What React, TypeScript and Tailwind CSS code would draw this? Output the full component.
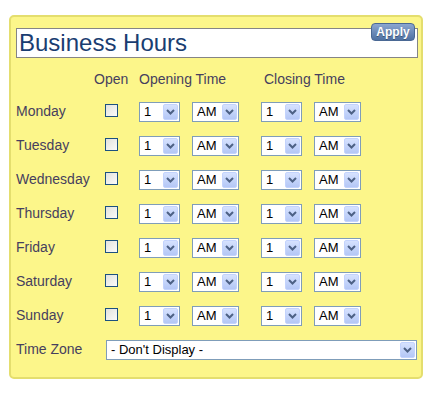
import React from "react";

const days = ["Monday", "Tuesday", "Wednesday", "Thursday", "Friday", "Saturday", "Sunday"];

const Chevron = () => (
  <svg width="9" height="6" viewBox="0 0 9 6" className="block">
    <path d="M1 1 L4.5 4.5 L8 1" fill="none" stroke="#4d6185" strokeWidth="2" />
  </svg>
);

// XP-style drop-down box
const FakeSelect = ({ value, width, grow = false }: { value: string; width?: string; grow?: boolean }) => (
  <div
    className={`flex h-[20px] items-stretch border border-[#7f9db9] bg-white p-px ${grow ? "flex-1" : ""} ${width ?? ""}`}
  >
    <span className="flex-1 pl-[3px] text-[13px] leading-[16px] text-black">{value}</span>
    <span className="flex w-[15px] items-center justify-center rounded-[2px] border border-[#c3d3fd] bg-gradient-to-b from-[#d6e2fe] to-[#b4c7f6]">
      <Chevron />
    </span>
  </div>
);

const Checkbox = () => (
  <div className="mb-[3px] h-[13px] w-[13px] border border-[#1c5180] bg-gradient-to-br from-[#e2e2dd] to-[#fbfbf9]" />
);

export default function App() {
  return (
    <div className="min-h-[393px] bg-white pt-[15px] pl-[9px]" style={{ fontFamily: '"Liberation Sans", Arial, sans-serif' }}>
      <div className="relative w-[414px] rounded-[5px] border-2 border-[#e4de6e] bg-[#fcf68a] pt-[11px] pr-[3px] pb-[10px] pl-[5px] text-[14px] text-[#463f5e]">
        <div className="h-[30px] border border-[#858585] bg-white pl-[2px] text-[24px] leading-[27px] text-[#1a3d71]">
          Business Hours
        </div>
        <button className="absolute top-[6px] right-[6px] h-[18px] w-[44px] rounded-[4px] border border-[#4a6894] bg-gradient-to-b from-[#8ba6d0] to-[#4f71a2] text-[12px] leading-[15px] font-bold text-white [text-shadow:0_1px_0_#3a5478]">
          Apply
        </button>

        <div className="mt-[13px] mb-[8px] flex h-[16px] items-center leading-[16px]">
          <div className="w-[78px]" />
          <div className="w-[34px] text-center">Open</div>
          <div className="ml-[11px] w-[100px]">Opening Time</div>
          <div className="ml-[25px]">Closing Time</div>
        </div>

        {days.map((d) => (
          <div key={d} className="flex h-[34px] items-center">
            <div className="mb-[2px] w-[78px] leading-[16px]">{d}</div>
            <div className="flex w-[34px] justify-center">
              <Checkbox />
            </div>
            <div className="ml-[11px] flex gap-[12px]">
              <FakeSelect value="1" width="w-[41px]" />
              <FakeSelect value="AM" width="w-[47px]" />
            </div>
            <div className="ml-[22px] flex gap-[12px]">
              <FakeSelect value="1" width="w-[41px]" />
              <FakeSelect value="AM" width="w-[47px]" />
            </div>
          </div>
        ))}

        <div className="flex h-[34px] items-center">
          <div className="mb-[2px] w-[90px] leading-[16px]">Time Zone</div>
          <div className="mr-px flex flex-1">
            <FakeSelect value="- Don't Display -" grow />
          </div>
        </div>
      </div>
    </div>
  );
}
